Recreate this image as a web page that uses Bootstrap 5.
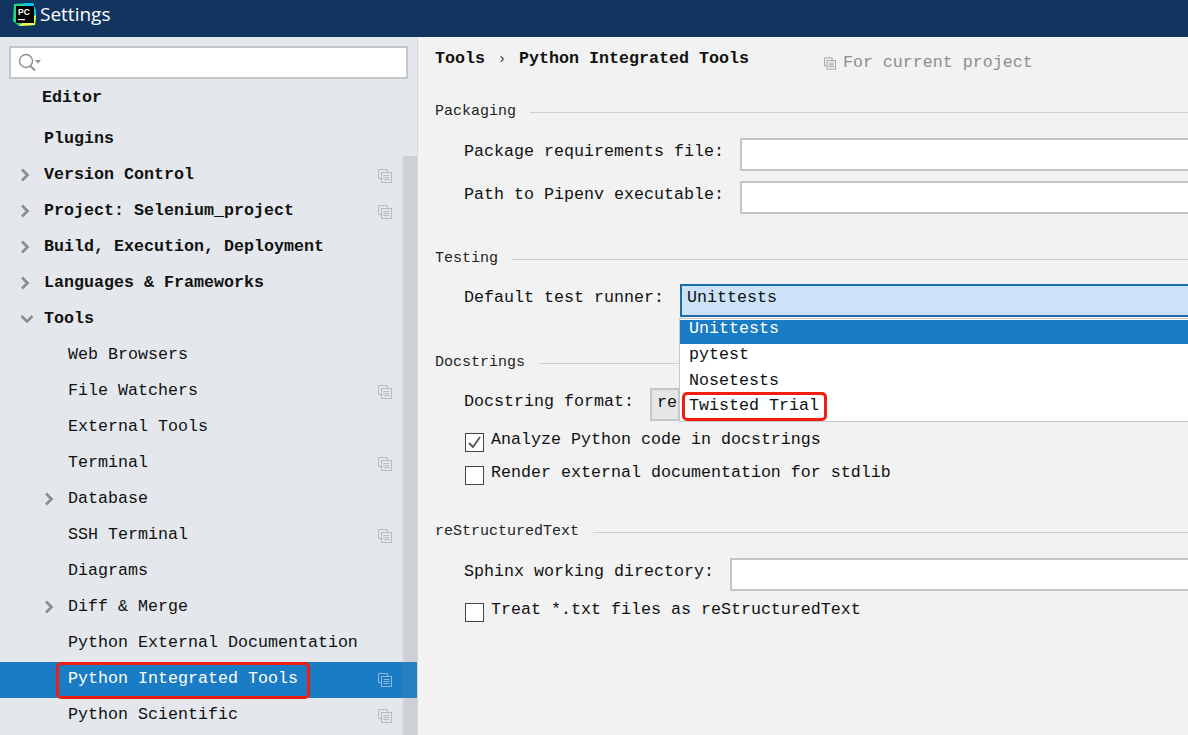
<!doctype html>
<html lang="en"><head><meta charset="utf-8"><title>Settings</title>
<link rel="stylesheet" href="https://cdn.jsdelivr.net/npm/bootstrap@5.3.0/dist/css/bootstrap.min.css">
<style>
html,body{height:735px;overflow:hidden;margin:0}
body{font-family:"Liberation Mono",monospace;font-size:16.67px;line-height:20px;color:#111;background:#f2f2f2}
.titlebar{height:37px;background:#12355f;color:#fff;font-family:"Open Sans",sans-serif;font-size:19px;padding:0 0 9px 11px;gap:3px}
.app{height:698px}
.side{width:418px;background:#e4e8ed;border-right:1px solid #d6d8da;position:relative;overflow:hidden;flex:none}
.searchbox{margin:9px 0 2px 9px;width:399px;height:33px;background:#fff;border:2px solid #c4c6c8;padding-left:6px}
.trow{height:36px;position:relative;padding-bottom:2px}
.trow b{font-weight:700}
.lv0{padding-left:44px}.lv1{padding-left:68px}
.first{padding-left:42px}.gap5{margin-top:5px}
.arrow{position:absolute;top:10px}
.lv0 .arrow{left:20px}.lv1 .arrow{left:44px}
.copyic{position:absolute;left:378px;top:11px}
.sel{background:linear-gradient(to right,#1a7cc4 402px,#2a80bf 402px);color:#fff;z-index:1}
.sbar{position:absolute;left:402px;top:119px;bottom:0;width:15px;background:#cdd0d4;border-left:2px solid #d9dbde}
.redbox{position:absolute;border:3px solid #f11d10;border-radius:5px;pointer-events:none;z-index:2}
.rb1{left:56px;top:625px;width:254px;height:37px}
.main{flex:1;position:relative;overflow:hidden;padding-left:17px}
.crumb{height:65px;padding-top:12px}
.crumb b{font-weight:700}
.sepc{width:34px;text-align:center;color:#333;font-size:14px}
.forcur{color:#8e8e8e;margin-left:75px;margin-top:4px;gap:7px;height:20px}
.sect{font-size:15px;height:20px;color:#222;gap:14px;white-space:nowrap}
.sect i{flex:1;height:1px;background:#cfcfcf;margin-right:-20px}
.frow{padding-left:29px;white-space:pre;gap:16px}
.frow>span{padding-bottom:6px}
.tinput{background:#fff;border:2px solid #c4c6c8;height:33px;flex:1;margin-right:-10px}
.combo{flex:1;height:33px;background:#cce3f7;border:2px solid #1b6ca8;padding-left:5px;margin-right:-10px;line-height:24px}
.popup{position:absolute;left:261px;top:281px;width:520px;height:104px;background:#fff;border:1px solid #c8c8c8;padding-top:1px}
.pitem{height:25.5px;padding-left:9px;line-height:22px}
.pitem.on{background:#1a7cc4;color:#fff;height:24px;line-height:18px}
.rb2{left:264px;top:355px;width:145px;height:29px}
.sel2{background:#e6e6e6;border:2px solid #c4c6c8;height:33px;width:30px;padding-left:5px;line-height:26px;overflow:hidden}
.cbox{width:19px;height:19px;background:#fff;border:1px solid #444;flex:none;margin:0 7px 0 1px}
.crow{padding-left:29px;height:33px}
.crow>span{padding-bottom:6px}
.top16{margin-top:16px}.top15{margin-top:15px}.top10{margin-top:10px}.top5{margin-top:5px}
.top35{margin-top:35px}.top36{margin-top:36px}.top30{margin-top:30px}
</style></head><body>
<div class="titlebar d-flex align-items-center">
<svg width="26" height="26" viewBox="0 0 26 26"><path d="M3 3L22 2L25 10L24 24L8 25L2 20Z" fill="#21d789"/><path d="M13 2H22L25 10V19L15 8Z" fill="#07c3f2"/><path d="M8 25L24 24L25 14L14 20Z" fill="#fcf84a"/><rect x="5" y="5" width="18" height="17" fill="#000"/><text x="7" y="14" font-family="Liberation Sans" font-size="8.5" font-weight="700" fill="#fff">PC</text><rect x="7" y="18" width="7" height="1.2" fill="#fff"/></svg>
<span>Settings</span></div>
<div class="app d-flex">
<aside class="side">
<div class="searchbox d-flex align-items-center">
<svg width="24" height="22" viewBox="0 0 24 22"><circle cx="9" cy="9" r="6.5" fill="none" stroke="#8a9299" stroke-width="1.4"/><path d="M13.5 14L18 18.5" stroke="#8a9299" stroke-width="2"/><path d="M18 8h6l-3 3.5z" fill="#8a9299"/></svg></div>
<div class="trow first d-flex align-items-center"><b>Editor</b></div>
<div class="trow lv0 gap5 d-flex align-items-center"><b>Plugins</b></div>
<div class="trow lv0 d-flex align-items-center"><svg class="arrow" width="10" height="14" viewBox="0 0 10 14"><path d="M2 1.5L7.5 7L2 12.5" fill="none" stroke="#8c8c8c" stroke-width="2.6"/></svg><b>Version Control</b><svg class="copyic" width="14" height="14" viewBox="0 0 14 14"><path d="M.5.5h9v3M.5.5v9h3" fill="none" stroke="#b5babf"/><rect x="3.5" y="3.5" width="10" height="10" fill="none" stroke="#b5babf"/><path d="M5.5 6.5h6M5.5 8.5h6M5.5 10.5h6" stroke="#b5babf"/></svg></div>
<div class="trow lv0 d-flex align-items-center"><svg class="arrow" width="10" height="14" viewBox="0 0 10 14"><path d="M2 1.5L7.5 7L2 12.5" fill="none" stroke="#8c8c8c" stroke-width="2.6"/></svg><b>Project: Selenium_project</b><svg class="copyic" width="14" height="14" viewBox="0 0 14 14"><path d="M.5.5h9v3M.5.5v9h3" fill="none" stroke="#b5babf"/><rect x="3.5" y="3.5" width="10" height="10" fill="none" stroke="#b5babf"/><path d="M5.5 6.5h6M5.5 8.5h6M5.5 10.5h6" stroke="#b5babf"/></svg></div>
<div class="trow lv0 d-flex align-items-center"><svg class="arrow" width="10" height="14" viewBox="0 0 10 14"><path d="M2 1.5L7.5 7L2 12.5" fill="none" stroke="#8c8c8c" stroke-width="2.6"/></svg><b>Build, Execution, Deployment</b></div>
<div class="trow lv0 d-flex align-items-center"><svg class="arrow" width="10" height="14" viewBox="0 0 10 14"><path d="M2 1.5L7.5 7L2 12.5" fill="none" stroke="#8c8c8c" stroke-width="2.6"/></svg><b>Languages &amp; Frameworks</b></div>
<div class="trow lv0 d-flex align-items-center"><svg class="arrow" width="14" height="14" viewBox="0 0 14 14"><path d="M1.5 4L7 9.5L12.5 4" fill="none" stroke="#8c8c8c" stroke-width="2.6"/></svg><b>Tools</b></div>
<div class="trow lv1 d-flex align-items-center">Web Browsers</div>
<div class="trow lv1 d-flex align-items-center">File Watchers<svg class="copyic" width="14" height="14" viewBox="0 0 14 14"><path d="M.5.5h9v3M.5.5v9h3" fill="none" stroke="#b5babf"/><rect x="3.5" y="3.5" width="10" height="10" fill="none" stroke="#b5babf"/><path d="M5.5 6.5h6M5.5 8.5h6M5.5 10.5h6" stroke="#b5babf"/></svg></div>
<div class="trow lv1 d-flex align-items-center">External Tools</div>
<div class="trow lv1 d-flex align-items-center">Terminal<svg class="copyic" width="14" height="14" viewBox="0 0 14 14"><path d="M.5.5h9v3M.5.5v9h3" fill="none" stroke="#b5babf"/><rect x="3.5" y="3.5" width="10" height="10" fill="none" stroke="#b5babf"/><path d="M5.5 6.5h6M5.5 8.5h6M5.5 10.5h6" stroke="#b5babf"/></svg></div>
<div class="trow lv1 d-flex align-items-center"><svg class="arrow" width="10" height="14" viewBox="0 0 10 14"><path d="M2 1.5L7.5 7L2 12.5" fill="none" stroke="#8c8c8c" stroke-width="2.6"/></svg>Database</div>
<div class="trow lv1 d-flex align-items-center">SSH Terminal<svg class="copyic" width="14" height="14" viewBox="0 0 14 14"><path d="M.5.5h9v3M.5.5v9h3" fill="none" stroke="#b5babf"/><rect x="3.5" y="3.5" width="10" height="10" fill="none" stroke="#b5babf"/><path d="M5.5 6.5h6M5.5 8.5h6M5.5 10.5h6" stroke="#b5babf"/></svg></div>
<div class="trow lv1 d-flex align-items-center">Diagrams</div>
<div class="trow lv1 d-flex align-items-center"><svg class="arrow" width="10" height="14" viewBox="0 0 10 14"><path d="M2 1.5L7.5 7L2 12.5" fill="none" stroke="#8c8c8c" stroke-width="2.6"/></svg>Diff &amp; Merge</div>
<div class="trow lv1 d-flex align-items-center">Python External Documentation</div>
<div class="trow lv1 sel d-flex align-items-center">Python Integrated Tools<svg class="copyic" width="14" height="14" viewBox="0 0 14 14"><path d="M.5.5h9v3M.5.5v9h3" fill="none" stroke="#8fb9d8"/><rect x="3.5" y="3.5" width="10" height="10" fill="none" stroke="#8fb9d8"/><path d="M5.5 6.5h6M5.5 8.5h6M5.5 10.5h6" stroke="#8fb9d8"/></svg></div>
<div class="trow lv1 d-flex align-items-center">Python Scientific<svg class="copyic" width="14" height="14" viewBox="0 0 14 14"><path d="M.5.5h9v3M.5.5v9h3" fill="none" stroke="#b5babf"/><rect x="3.5" y="3.5" width="10" height="10" fill="none" stroke="#b5babf"/><path d="M5.5 6.5h6M5.5 8.5h6M5.5 10.5h6" stroke="#b5babf"/></svg></div>
<div class="sbar"></div>
<div class="redbox rb1"></div>
</aside>
<main class="main">
<div class="crumb d-flex"><b>Tools</b><span class="sepc">›</span><b>Python Integrated Tools</b>
<div class="forcur d-flex align-items-center"><svg width="12" height="13" viewBox="0 0 14 14"><path d="M.5.5h9v3M.5.5v9h3" fill="none" stroke="#9a9a9a"/><rect x="3.5" y="3.5" width="10" height="10" fill="none" stroke="#9a9a9a"/><path d="M5.5 6.5h6M5.5 8.5h6M5.5 10.5h6" stroke="#9a9a9a"/></svg><span>For current project</span></div></div>
<div class="sect d-flex align-items-center">Packaging<i></i></div>
<div class="frow d-flex align-items-center top16"><span>Package requirements file:</span><div class="tinput"></div></div>
<div class="frow d-flex align-items-center top10"><span>Path to Pipenv executable:</span><div class="tinput"></div></div>
<div class="sect d-flex align-items-center top35">Testing<i></i></div>
<div class="frow d-flex align-items-center top15"><span>Default test runner:</span><div class="combo">Unittests</div></div>
<div class="sect d-flex align-items-center top36">Docstrings<i></i></div>
<div class="frow d-flex align-items-center top15"><span>Docstring format:</span><div class="sel2">re</div></div>
<div class="crow d-flex align-items-center top5"><div class="cbox d-flex align-items-center justify-content-center"><svg width="15" height="15" viewBox="0 0 15 15"><path d="M2 8l4 4L13 2" fill="none" stroke="#555" stroke-width="1.8"/></svg></div><span>Analyze Python code in docstrings</span></div>
<div class="crow d-flex align-items-center"><div class="cbox"></div><span>Render external documentation for stdlib</span></div>
<div class="sect d-flex align-items-center top30">reStructuredText<i></i></div>
<div class="frow d-flex align-items-center top16"><span>Sphinx working directory:</span><div class="tinput"></div></div>
<div class="crow d-flex align-items-center top5"><div class="cbox"></div><span>Treat *.txt files as reStructuredText</span></div>
<div class="popup">
<div class="pitem on">Unittests</div><div class="pitem">pytest</div><div class="pitem">Nosetests</div><div class="pitem">Twisted Trial</div></div>
<div class="redbox rb2"></div>
</main>
</div>
</body></html>
